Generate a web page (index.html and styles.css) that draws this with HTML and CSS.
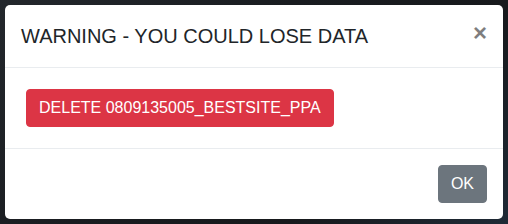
FILE: index.html
```html
<!DOCTYPE html>
<html>
<head>
<meta charset="utf-8">
<link rel="stylesheet" href="styles.css">
</head>
<body>
<div class="backdrop">
  <div class="modal">
    <div class="modal-header">
      <h5 class="modal-title">WARNING - YOU COULD LOSE DATA</h5>
      <button class="close" type="button">&times;</button>
    </div>
    <div class="modal-body">
      <button class="btn btn-danger" type="button">DELETE 0809135005_BESTSITE_PPA</button>
    </div>
    <div class="modal-footer">
      <button class="btn btn-secondary" type="button">OK</button>
    </div>
  </div>
</div>
</body>
</html>
```

FILE: styles.css
```css
* { box-sizing: border-box; }
html, body { margin: 0; padding: 0; }
body {
  width: 508px;
  height: 224px;
  overflow: hidden;
  background: #1b1e22;
  font-family: "Liberation Sans", Arial, sans-serif;
  color: #212529;
}
.backdrop {
  padding: 5px;
  height: 224px;
  background: linear-gradient(135deg, #23272c 0%, #191c20 40%, #17191c 70%, #1f2a36 100%);
}
.modal {
  width: 498px;
  background: #fff;
  border: 0;
  border-radius: 5px;
  display: flex;
  flex-direction: column;
}
.modal-header {
  display: flex;
  align-items: flex-start;
  justify-content: space-between;
  padding: 16px;
  border-bottom: 1px solid #e9ecef;
}
.modal-title {
  margin: 0;
  font-size: 20px;
  font-weight: 400;
  line-height: 30px;
}
.close {
  padding: 16px;
  margin: -16px -16px -16px auto;
  background: transparent;
  border: 0;
  font-family: "Liberation Sans", Arial, sans-serif;
  font-size: 24px;
  font-weight: 700;
  line-height: 1;
  color: #000;
  opacity: .5;
  text-shadow: 0 1px 0 #fff;
}
.modal-body {
  padding: 16px;
  display: flex;
}
.btn {
  font-family: "Liberation Sans", Arial, sans-serif;
  font-size: 16px;
  line-height: 24px;
  padding: 6px 12px;
  border: 1px solid transparent;
  border-radius: 4px;
  color: #fff;
}
.btn-danger {
  background: #dc3545;
  border-color: #dc3545;
  margin: 5px;
}
.btn-secondary {
  background: #6c757d;
  border-color: #6c757d;
}
.modal-footer {
  display: flex;
  justify-content: flex-end;
  padding: 16px;
  border-top: 1px solid #e9ecef;
}
```
